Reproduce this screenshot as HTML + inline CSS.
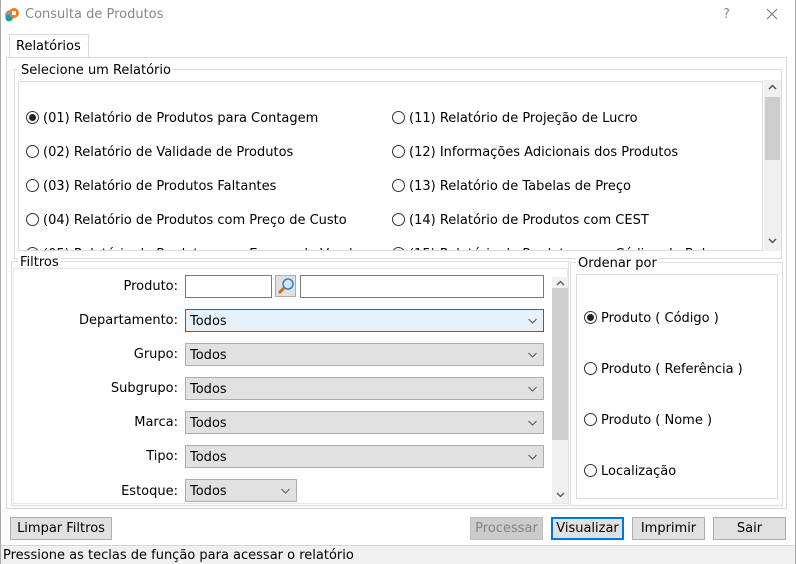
<!DOCTYPE html>
<html><head><meta charset="utf-8"><style>
*{box-sizing:border-box;margin:0;padding:0}
body{width:796px;height:564px;position:relative;background:#fff;font-family:"DejaVu Sans",Tahoma,sans-serif;font-size:13px;color:#000;overflow:hidden}
.a{position:absolute}
.rad{position:absolute;width:13px;height:13px;border:1px solid #333;border-radius:50%;background:#fff}
.rad.on::after{content:"";position:absolute;left:2px;top:2px;width:7px;height:7px;border-radius:50%;background:#222}
.lbl{position:absolute;white-space:nowrap;margin-top:2px}
.cb{position:absolute;height:23px;border:1px solid #adadad;background:#e1e1e1;padding:4px 4px 0;font-size:13px}
.cb svg{position:absolute;right:6px;top:8px}
.btn{position:absolute;height:23px;border:1px solid #adadad;background:#e1e1e1;text-align:center;line-height:22px}
</style></head><body>
<div class="a" style="left:0;top:0;width:1px;height:564px;background:#aaa"></div>
<div class="a" style="right:0;top:0;width:1px;height:564px;background:#aaa"></div>
<svg class="a" style="left:4px;top:6px" width="16" height="16"><circle cx="6" cy="9" r="5" fill="#9a9a9a"/><circle cx="5" cy="12" r="3.5" fill="#1aa0a0"/><circle cx="10" cy="7" r="5" fill="#f07a20"/><rect x="8" y="5" width="4" height="4" fill="#fff"/></svg>
<div class="lbl" style="left:25px;top:5px;color:#888">Consulta de Produtos</div>
<div class="lbl" style="left:723px;top:5px;color:#888">?</div>
<svg class="a" style="left:766px;top:8px" width="12" height="12"><path d="M1 1L11 11M11 1L1 11" stroke="#777" stroke-width="1"/></svg>
<div class="a" style="left:9px;top:34px;width:80px;height:24px;border:1px solid #d9d9d9;border-bottom:none;background:#fff"></div>
<div class="lbl" style="left:16px;top:37px">Relatórios</div>
<div class="a" style="left:6px;top:57px;width:781px;height:452px;border:1px solid #d9d9d9"></div>
<div class="a" style="left:14px;top:69px;width:768px;height:190px;border:1px solid #dcdcdc"></div>
<div class="lbl" style="left:19px;top:61px;background:#fff;padding:0 2px">Selecione um Relatório</div>
<div class="a" style="left:18px;top:81px;width:745px;height:170px;border:1px solid #dcdcdc"></div>
<div class="a" style="left:19px;top:82px;width:743px;height:168px;overflow:hidden">
 <div class="rad on" style="left:7px;top:29px"></div><div class="lbl" style="left:24px;top:27px">(01) Relatório de Produtos para Contagem</div>
 <div class="rad" style="left:7px;top:63px"></div><div class="lbl" style="left:24px;top:61px">(02) Relatório de Validade de Produtos</div>
 <div class="rad" style="left:7px;top:97px"></div><div class="lbl" style="left:24px;top:95px">(03) Relatório de Produtos Faltantes</div>
 <div class="rad" style="left:7px;top:131px"></div><div class="lbl" style="left:24px;top:129px">(04) Relatório de Produtos com Preço de Custo</div>
 <div class="rad" style="left:7px;top:165px"></div><div class="lbl" style="left:24px;top:163px">(05) Relatório de Produtos com Escopo de Venda</div>
 <div class="rad" style="left:373px;top:29px"></div><div class="lbl" style="left:390px;top:27px">(11) Relatório de Projeção de Lucro</div>
 <div class="rad" style="left:373px;top:63px"></div><div class="lbl" style="left:390px;top:61px">(12) Informações Adicionais dos Produtos</div>
 <div class="rad" style="left:373px;top:97px"></div><div class="lbl" style="left:390px;top:95px">(13) Relatório de Tabelas de Preço</div>
 <div class="rad" style="left:373px;top:131px"></div><div class="lbl" style="left:390px;top:129px">(14) Relatório de Produtos com CEST</div>
 <div class="rad" style="left:373px;top:165px"></div><div class="lbl" style="left:390px;top:163px">(15) Relatório de Produtos com Código de Balança</div>
</div>
<div class="a" style="left:764px;top:80px;width:17px;height:171px;background:#f0f0f0"></div>
<div class="a" style="left:765px;top:97px;width:15px;height:63px;background:#cdcdcd"></div>
<svg class="a" style="left:768px;top:84px" width="9" height="6"><path d="M1 5L4.5 1.5L8 5" stroke="#555" fill="none" stroke-width="1.5"/></svg>
<svg class="a" style="left:768px;top:238px" width="9" height="6"><path d="M1 1L4.5 4.5L8 1" stroke="#555" fill="none" stroke-width="1.5"/></svg>
<div class="a" style="left:11px;top:261px;width:558px;height:245px;border:1px solid #dcdcdc;background:#fff"></div>
<div class="lbl" style="left:18px;top:253px;background:#fff;padding:0 2px">Filtros</div>
<div class="a" style="left:13px;top:268px;width:555px;height:236px;border:1px solid #e6e6e6"></div>
<div class="lbl" style="right:618px;top:277px">Produto:</div>
<div class="a" style="left:185px;top:275px;width:87px;height:23px;border:1px solid #7a7a7a;background:#fff"></div>
<div class="a" style="left:275px;top:275px;width:21px;height:22px;border:1px solid #adadad;background:#e1e1e1"></div>
<svg class="a" style="left:277px;top:277px" width="18" height="18"><circle cx="11" cy="7" r="5" fill="#cfe8ff" stroke="#3a7fc0" stroke-width="1.5"/><path d="M7 11L2 16" stroke="#c07020" stroke-width="3"/></svg>
<div class="a" style="left:300px;top:275px;width:244px;height:23px;border:1px solid #7a7a7a;background:#fff"></div>
<div class="lbl" style="right:618px;top:311px">Departamento:</div>
<div class="cb" style="left:185px;top:309px;width:359px;background:#e5f1fb;border-color:#0078d7">Todos<svg width="9" height="6"><path d="M0.5 1L4.5 5L8.5 1" stroke="#555" fill="none"/></svg></div>
<div class="lbl" style="right:618px;top:345px">Grupo:</div>
<div class="cb" style="left:185px;top:343px;width:359px">Todos<svg width="9" height="6"><path d="M0.5 1L4.5 5L8.5 1" stroke="#555" fill="none"/></svg></div>
<div class="lbl" style="right:618px;top:379px">Subgrupo:</div>
<div class="cb" style="left:185px;top:377px;width:359px">Todos<svg width="9" height="6"><path d="M0.5 1L4.5 5L8.5 1" stroke="#555" fill="none"/></svg></div>
<div class="lbl" style="right:618px;top:413px">Marca:</div>
<div class="cb" style="left:185px;top:411px;width:359px">Todos<svg width="9" height="6"><path d="M0.5 1L4.5 5L8.5 1" stroke="#555" fill="none"/></svg></div>
<div class="lbl" style="right:618px;top:447px">Tipo:</div>
<div class="cb" style="left:185px;top:445px;width:359px">Todos<svg width="9" height="6"><path d="M0.5 1L4.5 5L8.5 1" stroke="#555" fill="none"/></svg></div>
<div class="lbl" style="right:618px;top:482px">Estoque:</div>
<div class="cb" style="left:185px;top:479px;width:112px">Todos<svg width="9" height="6"><path d="M0.5 1L4.5 5L8.5 1" stroke="#555" fill="none"/></svg></div>
<div class="a" style="left:552px;top:277px;width:16px;height:226px;background:#f0f0f0"></div>
<div class="a" style="left:552px;top:288px;width:16px;height:152px;background:#cdcdcd"></div>
<svg class="a" style="left:556px;top:280px" width="9" height="6"><path d="M1 5L4.5 1.5L8 5" stroke="#555" fill="none" stroke-width="1.3"/></svg>
<svg class="a" style="left:556px;top:492px" width="9" height="6"><path d="M1 1L4.5 4.5L8 1" stroke="#555" fill="none" stroke-width="1.3"/></svg>
<div class="a" style="left:570px;top:262px;width:213px;height:244px;border:1px solid #dcdcdc"></div>
<div class="lbl" style="left:576px;top:254px;background:#fff;padding:0 2px">Ordenar por</div>
<div class="a" style="left:576px;top:274px;width:202px;height:225px;border:1px solid #dcdcdc"></div>
<div class="rad on" style="left:584px;top:311px"></div><div class="lbl" style="left:601px;top:309px">Produto ( Código )</div>
<div class="rad" style="left:584px;top:362px"></div><div class="lbl" style="left:601px;top:360px">Produto ( Referência )</div>
<div class="rad" style="left:584px;top:413px"></div><div class="lbl" style="left:601px;top:411px">Produto ( Nome )</div>
<div class="rad" style="left:584px;top:464px"></div><div class="lbl" style="left:601px;top:462px">Localização</div>
<div class="btn" style="left:10px;top:517px;width:102px">Limpar Filtros</div>
<div class="btn" style="left:470px;top:517px;width:73px;background:#cccccc;border-color:#bfbfbf;color:#838383">Processar</div>
<div class="btn" style="left:551px;top:517px;width:73px;border:2px solid #0078d7;line-height:20px">Visualizar</div>
<div class="btn" style="left:632px;top:517px;width:73px">Imprimir</div>
<div class="btn" style="left:713px;top:517px;width:73px">Sair</div>
<div class="a" style="left:1px;top:545px;width:794px;height:19px;background:#f0f0f0;border-top:1px solid #d7d7d7"></div>
<div class="lbl" style="left:3px;top:546px">Pressione as teclas de função para acessar o relatório</div>
</body></html>
